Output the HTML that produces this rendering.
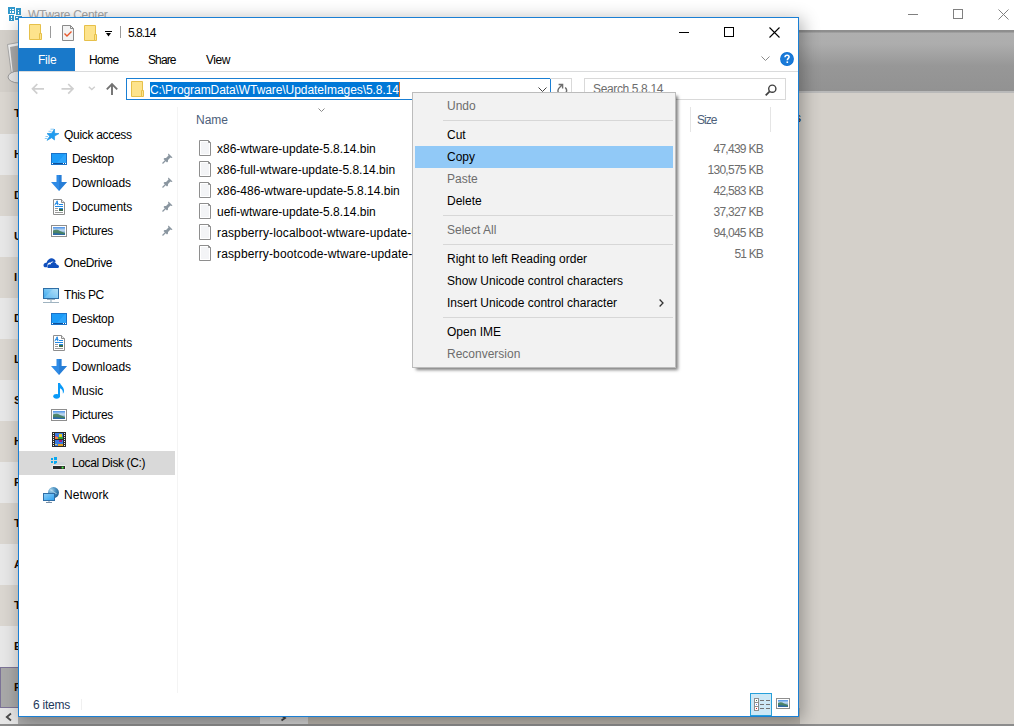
<!DOCTYPE html>
<html><head><meta charset="utf-8">
<style>
*{margin:0;padding:0;box-sizing:border-box}
html,body{width:1014px;height:726px;overflow:hidden;background:#d4d0ca;font-family:"Liberation Sans",sans-serif;font-size:12px;color:#000}
.a{position:absolute}
.t{position:absolute;white-space:nowrap;line-height:14px}
svg{position:absolute;overflow:visible}
.nv{position:absolute;white-space:nowrap;line-height:14px;color:#000}
.fn{position:absolute;left:217px;white-space:nowrap;line-height:14px}
.sz{position:absolute;right:251px;white-space:nowrap;line-height:14px;color:#6d6d6d;text-align:right}
.mi{position:absolute;left:447px;white-space:nowrap;line-height:14px}
.dis{color:#6d6d6d}
.sep{position:absolute;left:443px;width:230px;height:1px;background:#d7d7d7}
</style></head><body>
<div class="a" style="left:0;top:0;width:1014px;height:30px;background:#fff"></div><div class="a" style="left:0;top:30px;width:1014px;height:63px;background:linear-gradient(#8e8e8e 0px,#8e8e8e 2px,#afafaf 3px,#adadad 14px,#979797 36px,#929292 61px,#b9b9b9 61px,#b9b9b9 63px)"></div><svg style="left:0;top:0" width="30" height="30" viewBox="0 0 30 30" shape-rendering="crispEdges"><g fill="#3399cc"><rect x="8" y="7" width="7" height="7"/><rect x="16" y="8" width="5" height="7"/><rect x="9" y="15" width="5" height="6"/><rect x="15" y="16" width="7" height="4"/></g><g fill="#fff"><rect x="10" y="9" width="1" height="1"/><rect x="12" y="9" width="2" height="1"/><rect x="10" y="11" width="1" height="2"/><rect x="12" y="11" width="2" height="2"/><rect x="18" y="10" width="1" height="1"/><rect x="18" y="12" width="1" height="2"/><rect x="11" y="16" width="1" height="2"/><rect x="11" y="19" width="1" height="1"/><rect x="16" y="17" width="2" height="1"/></g></svg><div class="t" style="left:28px;top:8px;color:#a6a6a6;font-size:12px;letter-spacing:-0.3px">WTware Center</div><div class="a" style="left:908px;top:14px;width:10px;height:1px;background:#808080"></div><div class="a" style="left:953px;top:9px;width:10px;height:10px;border:1px solid #808080"></div><svg style="left:998px;top:9px" width="11" height="11"><path d="M0.5 0.5L10.5 10.5M10.5 0.5L0.5 10.5" stroke="#808080" stroke-width="1"/></svg><div class="a" style="left:0;top:92px;width:30px;height:42px;background:#dad6d0"></div><div class="t" style="left:14px;top:106px;color:#1a0a00;font-size:11.5px;font-weight:bold">T</div><div class="a" style="left:0;top:134px;width:30px;height:41px;background:#e7e7e7"></div><div class="t" style="left:14px;top:147px;color:#1a0a00;font-size:11.5px;font-weight:bold">H</div><div class="a" style="left:0;top:175px;width:30px;height:41px;background:#dad6d0"></div><div class="t" style="left:14px;top:188px;color:#1a0a00;font-size:11.5px;font-weight:bold">D</div><div class="a" style="left:0;top:216px;width:30px;height:41px;background:#e7e7e7"></div><div class="t" style="left:14px;top:229px;color:#1a0a00;font-size:11.5px;font-weight:bold">U</div><div class="a" style="left:0;top:257px;width:30px;height:41px;background:#dad6d0"></div><div class="t" style="left:14px;top:270px;color:#1a0a00;font-size:11.5px;font-weight:bold">I</div><div class="a" style="left:0;top:298px;width:30px;height:41px;background:#e7e7e7"></div><div class="t" style="left:14px;top:311px;color:#1a0a00;font-size:11.5px;font-weight:bold">D</div><div class="a" style="left:0;top:339px;width:30px;height:41px;background:#dad6d0"></div><div class="t" style="left:14px;top:352px;color:#1a0a00;font-size:11.5px;font-weight:bold">L</div><div class="a" style="left:0;top:380px;width:30px;height:41px;background:#e7e7e7"></div><div class="t" style="left:14px;top:393px;color:#1a0a00;font-size:11.5px;font-weight:bold">S</div><div class="a" style="left:0;top:421px;width:30px;height:41px;background:#dad6d0"></div><div class="t" style="left:14px;top:434px;color:#1a0a00;font-size:11.5px;font-weight:bold">H</div><div class="a" style="left:0;top:462px;width:30px;height:41px;background:#e7e7e7"></div><div class="t" style="left:14px;top:475px;color:#1a0a00;font-size:11.5px;font-weight:bold">F</div><div class="a" style="left:0;top:503px;width:30px;height:41px;background:#dad6d0"></div><div class="t" style="left:14px;top:516px;color:#1a0a00;font-size:11.5px;font-weight:bold">T</div><div class="a" style="left:0;top:544px;width:30px;height:41px;background:#e7e7e7"></div><div class="t" style="left:14px;top:557px;color:#1a0a00;font-size:11.5px;font-weight:bold">A</div><div class="a" style="left:0;top:585px;width:30px;height:41px;background:#dad6d0"></div><div class="t" style="left:14px;top:598px;color:#1a0a00;font-size:11.5px;font-weight:bold">T</div><div class="a" style="left:0;top:626px;width:30px;height:41px;background:#e7e7e7"></div><div class="t" style="left:14px;top:639px;color:#1a0a00;font-size:11.5px;font-weight:bold">E</div><div class="a" style="left:0;top:667px;width:30px;height:41px;background:#a8a8a8;border:1px solid #7c7396"></div><div class="t" style="left:14px;top:680px;color:#1a0a00;font-size:11.5px;font-weight:bold">F</div><div class="a" style="left:0;top:708px;width:308px;height:16px;background:#e6e6e6"></div><div class="a" style="left:18px;top:708px;width:242px;height:16px;background:#acacac"></div><div class="a" style="left:260px;top:708px;width:48px;height:16px;background:#d0d0d0"></div><div class="a" style="left:308px;top:708px;width:492px;height:16px;background:#b6b1a9"></div><div class="a" style="left:0;top:724px;width:1014px;height:2px;background:#8c8c8c"></div><svg style="left:5px;top:713px" width="7" height="8"><path d="M6 0.5L1.8 4L6 7.5" stroke="#4a4a4a" stroke-width="1.8" fill="none"/></svg><svg style="left:281px;top:715px" width="6" height="6"><path d="M0.5 0.5L4 3L0.5 5.5" stroke="#404040" stroke-width="1.8" fill="none"/></svg><div class="t" style="left:795px;top:111px;color:#111">s</div><div class="a" style="left:0;top:30px;width:18px;height:62px;background:#d3cfc9"></div><svg style="left:7px;top:42px" width="14" height="44" viewBox="0 0 14 44"><path d="M0.5 2.5L14 0V34L5 36Z" fill="#f2f2f2" stroke="#9a9a9a" stroke-width="0.8"/><path d="M3 5L14 3V31L6 33Z" fill="#a8a8a8"/><ellipse cx="12" cy="35" rx="11" ry="6" fill="#e6e6e6" stroke="#8a8a8a" stroke-width="0.8"/></svg><div class="a" style="left:18px;top:17px;width:781px;height:700px;box-shadow:3px 3px 16px 1px rgba(0,0,0,0.30)"></div><div class="a" style="left:18px;top:17px;width:781px;height:700px;background:#fff;border:1px solid #1a7fd4"></div><svg style="left:29px;top:24px" width="14" height="16" viewBox="0 0 14 16"><path d="M0.5 0.5H11.5V15.5H0.5Z" fill="#fde38c" stroke="#e6c04a"/><path d="M10.5 9.5H12.5V15.5H10.5Z" fill="#fde38c" stroke="#e6c04a"/></svg><div class="a" style="left:50px;top:26px;width:1px;height:12px;background:#9a9a9a"></div><svg style="left:62px;top:25px" width="12" height="16" viewBox="0 0 12 16"><path d="M0.5 0.5H8.5L11.5 3.5V15.5H0.5Z" fill="#f3f3f3" stroke="#8a8a8a"/><path d="M8.5 0.5V3.5H11.5" fill="none" stroke="#8a8a8a"/><path d="M2.5 8.5L5 11L9.5 6.5" fill="none" stroke="#e8572a" stroke-width="1.4"/></svg><svg style="left:84px;top:25px" width="14" height="16" viewBox="0 0 14 16"><path d="M0.5 0.5H11.5V15.5H0.5Z" fill="#fde38c" stroke="#e6c04a"/><path d="M10.5 9.5H12.5V15.5H10.5Z" fill="#fde38c" stroke="#e6c04a"/></svg><div class="a" style="left:105px;top:31px;width:7px;height:1px;background:#000"></div><svg style="left:105px;top:33px" width="7" height="4"><path d="M1 0H6L3.5 3.5Z" fill="#000"/></svg><div class="a" style="left:120px;top:26px;width:1px;height:12px;background:#9a9a9a"></div><div class="t" style="left:128px;top:26px;letter-spacing:-1.0px">5.8.14</div><div class="a" style="left:679px;top:32px;width:10px;height:1px;background:#000"></div><div class="a" style="left:724px;top:27px;width:10px;height:10px;border:1px solid #000"></div><svg style="left:769px;top:27px" width="11" height="11"><path d="M0.5 0.5L10.5 10.5M10.5 0.5L0.5 10.5" stroke="#000" stroke-width="1.1"/></svg><div class="a" style="left:19px;top:48px;width:56px;height:23px;background:#1979ca"></div><div class="t" style="left:38px;top:53px;color:#fff;letter-spacing:-0.23px">File</div><div class="t" style="left:89px;top:53px;letter-spacing:-0.63px">Home</div><div class="t" style="left:148px;top:53px;letter-spacing:-0.88px">Share</div><div class="t" style="left:206px;top:53px;letter-spacing:-0.43px">View</div><svg style="left:761px;top:56px" width="9" height="6"><path d="M0.5 0.5L4.5 4.5L8.5 0.5" fill="none" stroke="#8a8a8a" stroke-width="1"/></svg><svg style="left:780px;top:52px" width="14" height="14" viewBox="0 0 14 14"><circle cx="7" cy="7" r="6.9" fill="#0b6fd2"/><circle cx="7" cy="7" r="6.2" fill="#1a7ad8"/><path d="M5 5.2C5 3.9 5.9 3.2 7.1 3.2C8.3 3.2 9.1 4 9.1 5C9.1 6.3 7.3 6.5 7.3 8.2" fill="none" stroke="#fff" stroke-width="1.5"/><rect x="6.5" y="9.4" width="1.6" height="1.6" fill="#fff"/></svg><div class="a" style="left:19px;top:71px;width:779px;height:1px;background:#dadbdc"></div><svg style="left:31px;top:83px" width="14" height="12"><path d="M13 5.8H1.5M6.3 1L1.5 5.8L6.3 10.6" fill="none" stroke="#cfcfcf" stroke-width="1.7"/></svg><svg style="left:61px;top:83px" width="14" height="12"><path d="M0.5 5.8H12M7.2 1L12 5.8L7.2 10.6" fill="none" stroke="#cfcfcf" stroke-width="1.7"/></svg><svg style="left:88px;top:86px" width="8" height="5"><path d="M0.8 0.8L3.8 3.6L6.8 0.8" fill="none" stroke="#cfcfcf" stroke-width="1.4"/></svg><svg style="left:106px;top:83px" width="12" height="12"><path d="M6 12V1.5M0.8 6.4L6 1.2L11.2 6.4" fill="none" stroke="#727272" stroke-width="1.9"/></svg><div class="a" style="left:126px;top:78px;width:425px;height:22px;border:1px solid #1a7fd4"></div><svg style="left:131px;top:81px" width="14" height="16" viewBox="0 0 14 16"><path d="M0.5 0.5H11.5V15.5H0.5Z" fill="#fde38c" stroke="#e6c04a"/><path d="M10.5 9.5H12.5V15.5H10.5Z" fill="#fde38c" stroke="#e6c04a"/></svg><div class="a" style="left:150px;top:82px;width:250px;height:15px;background:#0078d7"></div><div class="t" style="left:150px;top:82px;color:#fff;line-height:17px;letter-spacing:-0.08px">C:\ProgramData\WTware\UpdateImages\5.8.14</div><div class="a" style="left:399px;top:82px;width:1px;height:15px;background:#e07020"></div><svg style="left:538px;top:87px" width="9" height="5"><path d="M0.5 0.5L4.5 4.5L8.5 0.5" fill="none" stroke="#404040" stroke-width="1"/></svg><div class="a" style="left:550px;top:78px;width:22px;height:22px;border:1px solid #d9d9d9;border-left:none"></div><svg style="left:555px;top:82px" width="14" height="14"><path d="M10.2 5.6A4.2 4.2 0 1 1 3.6 6.6L7.4 2.6M3.6 2.5H7.6V6.5" fill="none" stroke="#6e6e6e" stroke-width="1.4"/></svg><div class="a" style="left:584px;top:78px;width:202px;height:22px;border:1px solid #d9d9d9"></div><div class="t" style="left:593px;top:82px;color:#6d6d6d;letter-spacing:-0.36px">Search 5.8.14</div><svg style="left:765px;top:84px" width="12" height="12"><circle cx="7.3" cy="4.7" r="3.6" fill="none" stroke="#404040" stroke-width="1.4"/><path d="M4.7 7.3L0.7 11.3" stroke="#404040" stroke-width="1.8"/></svg><div class="a" style="left:177px;top:107px;width:1px;height:586px;background:#f4f4f4"></div><div class="a" style="left:19px;top:451px;width:156px;height:24px;background:#d9d9d9"></div><svg style="left:43px;top:128px" width="17" height="14" viewBox="0 0 17 14"><path d="M11.5 1.0L11.6 5.3L16.0 5.6L11.6 8.1L11.5 12.0L8.6 9.8L4.0 12.4L6.7 8.2L4.0 5.6L8.6 5.3Z" fill="#1f9cf0" stroke="#1a8ee0" stroke-width="0.6" stroke-linejoin="round"/><path d="M7.5 1.2H11M5.5 3.3H8.5M2.5 8.5H5M1.8 10.5H4.5" stroke="#4aaef0" stroke-width="0.9" opacity="0.7"/></svg><div class="nv" style="left:64px;top:128px;letter-spacing:-0.3px">Quick access</div><svg style="left:51px;top:153px" width="16" height="12" viewBox="0 0 16 12" shape-rendering="crispEdges"><rect x="0" y="0" width="16" height="12" fill="#1a72c8"/><rect x="1" y="1" width="14" height="9" fill="#1c9cf8"/><path d="M6 10L14 1H15V10Z" fill="#40b0ff" opacity="0.5" shape-rendering="auto"/><rect x="1" y="10" width="14" height="1" fill="#0f4f98"/><rect x="1" y="10" width="1" height="1" fill="#fff"/><rect x="12" y="10" width="1" height="1" fill="#fff"/><rect x="14" y="10" width="1" height="1" fill="#fff"/></svg><div class="nv" style="left:72px;top:152px;letter-spacing:-0.32px">Desktop</div><svg style="left:51px;top:175px" width="16" height="16" viewBox="0 0 16 16"><path d="M5.5 0H10.5V7H16L8 16L0 7H5.5Z" fill="#2f8be6"/><path d="M8 0H10.5V7H16L8 16Z" fill="#1f72c8" opacity="0.5"/></svg><div class="nv" style="left:72px;top:176px;letter-spacing:-0.04px">Downloads</div><svg style="left:53px;top:199px" width="12" height="16" viewBox="0 0 12 16"><path d="M0.5 0.5H8.5L11.5 3.5V15.5H0.5Z" fill="#fff" stroke="#8e8e8e"/><path d="M8.5 0.5V3.5H11.5" fill="#e8e8e8" stroke="#8e8e8e"/><path d="M1.8 6.2L4.2 1.8M4.2 1.8L4.8 6.2M2.6 4.6H5.4" fill="none" stroke="#1e88e5" stroke-width="1"/><g fill="#1e88e5" shape-rendering="crispEdges"><rect x="6" y="5" width="4" height="1"/><rect x="2" y="7" width="8" height="1"/><rect x="6" y="9" width="4" height="1"/></g><g fill="#9a9a9a" shape-rendering="crispEdges"><rect x="2" y="9" width="3" height="1"/><rect x="2" y="11" width="3" height="1"/><rect x="2" y="13" width="8" height="1"/></g><rect x="6" y="10" width="4" height="2" fill="#3a6a4a"/></svg><div class="nv" style="left:72px;top:200px;letter-spacing:-0.04px">Documents</div><svg style="left:51px;top:225px" width="16" height="12" viewBox="0 0 16 12"><defs><linearGradient id="pg51225" x1="0" y1="0" x2="0" y2="1"><stop offset="0" stop-color="#4a90e8"/><stop offset="0.4" stop-color="#c4dcf0"/><stop offset="1" stop-color="#3f7ab0"/></linearGradient></defs><rect x="0.5" y="0.5" width="15" height="11" fill="#fff" stroke="#8e8e8e"/><rect x="2" y="2" width="12" height="8" fill="url(#pg51225)"/><path d="M2 5.5C4 4.5 7 4.5 9 6L14 8V10H2Z" fill="#3f7a55" opacity="0.85"/><path d="M2 8.5C5 8 10 9 14 9.3V10H2Z" fill="#2c6aa8"/></svg><div class="nv" style="left:72px;top:224px;letter-spacing:-0.29px">Pictures</div><svg style="left:43px;top:258px" width="16" height="10" viewBox="0 0 16 10"><path d="M0.5 7.5C0.5 5.5 2 4.5 3.5 4.8C4.5 1.5 7 0 9 0.3C11 0.6 12.5 2 12.8 3.6L11 4.2C10 3.2 8.5 3.4 7.8 4.6C6.2 4 4.5 5 4.4 7.2L3.8 9.2L1.8 9.2C1 9 0.5 8.3 0.5 7.5Z" fill="#0f4fbd"/><path d="M5.2 10C4.6 10 4.2 9.3 4.4 8.2C4.6 6.8 6 6 7.6 6.4C8.2 4.5 10 3.6 11.6 4.2C12.8 4.6 13.5 5.6 13.6 6.6C15 6.6 16 7.6 16 8.6C16 9.5 15.5 10 15 10Z" fill="#0f4fbd"/></svg><div class="nv" style="left:64px;top:256px;letter-spacing:-0.31px">OneDrive</div><svg style="left:43px;top:288px" width="16" height="15" viewBox="0 0 16 15"><defs><linearGradient id="pcg" x1="0" y1="1" x2="1" y2="0"><stop offset="0" stop-color="#3aa8ee"/><stop offset="1" stop-color="#a6dcf8"/></linearGradient></defs><rect x="0.5" y="0.5" width="15" height="10" fill="url(#pcg)" stroke="#2f6ea6"/><path d="M1 10L10 1H15V10Z" fill="#fff" opacity="0.18"/><rect x="4" y="11" width="8" height="1" fill="#9ab0bf"/><rect x="0" y="14" width="16" height="1" fill="#9fb3c0"/><rect x="7" y="12" width="2" height="2" fill="#c5d3dc"/></svg><div class="nv" style="left:64px;top:288px;letter-spacing:-0.4px">This PC</div><svg style="left:51px;top:313px" width="16" height="12" viewBox="0 0 16 12" shape-rendering="crispEdges"><rect x="0" y="0" width="16" height="12" fill="#1a72c8"/><rect x="1" y="1" width="14" height="9" fill="#1c9cf8"/><path d="M6 10L14 1H15V10Z" fill="#40b0ff" opacity="0.5" shape-rendering="auto"/><rect x="1" y="10" width="14" height="1" fill="#0f4f98"/><rect x="1" y="10" width="1" height="1" fill="#fff"/><rect x="12" y="10" width="1" height="1" fill="#fff"/><rect x="14" y="10" width="1" height="1" fill="#fff"/></svg><div class="nv" style="left:72px;top:312px;letter-spacing:-0.32px">Desktop</div><svg style="left:53px;top:335px" width="12" height="16" viewBox="0 0 12 16"><path d="M0.5 0.5H8.5L11.5 3.5V15.5H0.5Z" fill="#fff" stroke="#8e8e8e"/><path d="M8.5 0.5V3.5H11.5" fill="#e8e8e8" stroke="#8e8e8e"/><path d="M1.8 6.2L4.2 1.8M4.2 1.8L4.8 6.2M2.6 4.6H5.4" fill="none" stroke="#1e88e5" stroke-width="1"/><g fill="#1e88e5" shape-rendering="crispEdges"><rect x="6" y="5" width="4" height="1"/><rect x="2" y="7" width="8" height="1"/><rect x="6" y="9" width="4" height="1"/></g><g fill="#9a9a9a" shape-rendering="crispEdges"><rect x="2" y="9" width="3" height="1"/><rect x="2" y="11" width="3" height="1"/><rect x="2" y="13" width="8" height="1"/></g><rect x="6" y="10" width="4" height="2" fill="#3a6a4a"/></svg><div class="nv" style="left:72px;top:336px;letter-spacing:-0.04px">Documents</div><svg style="left:51px;top:359px" width="16" height="16" viewBox="0 0 16 16"><path d="M5.5 0H10.5V7H16L8 16L0 7H5.5Z" fill="#2f8be6"/><path d="M8 0H10.5V7H16L8 16Z" fill="#1f72c8" opacity="0.5"/></svg><div class="nv" style="left:72px;top:360px;letter-spacing:-0.04px">Downloads</div><svg style="left:53px;top:382px" width="12" height="17" viewBox="0 0 12 17"><rect x="5" y="1" width="2" height="14" fill="#0a9af8"/><ellipse cx="3.6" cy="14.3" rx="3.3" ry="2.4" fill="#0a9af8"/><path d="M7 1C7.8 3.5 11 5 11 8.5C11 10 10.5 11.2 9.8 11.6C10.2 9.5 9.5 7 7 6.2Z" fill="#0a9af8"/></svg><div class="nv" style="left:72px;top:384px">Music</div><svg style="left:51px;top:409px" width="16" height="12" viewBox="0 0 16 12"><defs><linearGradient id="pg51409" x1="0" y1="0" x2="0" y2="1"><stop offset="0" stop-color="#4a90e8"/><stop offset="0.4" stop-color="#c4dcf0"/><stop offset="1" stop-color="#3f7ab0"/></linearGradient></defs><rect x="0.5" y="0.5" width="15" height="11" fill="#fff" stroke="#8e8e8e"/><rect x="2" y="2" width="12" height="8" fill="url(#pg51409)"/><path d="M2 5.5C4 4.5 7 4.5 9 6L14 8V10H2Z" fill="#3f7a55" opacity="0.85"/><path d="M2 8.5C5 8 10 9 14 9.3V10H2Z" fill="#2c6aa8"/></svg><div class="nv" style="left:72px;top:408px;letter-spacing:-0.29px">Pictures</div><svg style="left:52px;top:432px" width="14" height="15" viewBox="0 0 14 15" shape-rendering="crispEdges"><rect x="0" y="0" width="14" height="15" fill="#2b2b2b"/><g fill="#f0f0f0"><rect x="1" y="1" width="1" height="1"/><rect x="1" y="3" width="1" height="1"/><rect x="1" y="5" width="1" height="1"/><rect x="1" y="7" width="1" height="1"/><rect x="1" y="9" width="1" height="1"/><rect x="1" y="11" width="1" height="1"/><rect x="1" y="13" width="1" height="1"/><rect x="12" y="1" width="1" height="1"/><rect x="12" y="3" width="1" height="1"/><rect x="12" y="5" width="1" height="1"/><rect x="12" y="7" width="1" height="1"/><rect x="12" y="9" width="1" height="1"/><rect x="12" y="11" width="1" height="1"/><rect x="12" y="13" width="1" height="1"/></g><rect x="3" y="1" width="8" height="6" fill="#3a7ae0"/><rect x="3" y="8" width="8" height="6" fill="#3a7ae0"/><rect x="7" y="2" width="3" height="3" fill="#e8d020"/><rect x="3" y="5" width="3" height="2" fill="#f08040"/><rect x="6" y="5" width="5" height="2" fill="#30a040"/><rect x="3" y="4" width="2" height="1" fill="#c040a0"/><rect x="7" y="8" width="3" height="2" fill="#a02080"/><rect x="6" y="12" width="5" height="2" fill="#e0a020"/><rect x="3" y="12" width="2" height="1" fill="#c8d080"/></svg><div class="nv" style="left:72px;top:432px;letter-spacing:-0.58px">Videos</div><svg style="left:51px;top:456px" width="16" height="15" viewBox="0 0 16 15"><g fill="#08a8f0" shape-rendering="crispEdges"><rect x="0" y="2" width="2" height="2"/><rect x="3" y="1" width="3" height="3"/><rect x="0" y="5" width="2" height="2"/><rect x="3" y="5" width="3" height="3"/></g><path d="M7 6H13L15 9.5H2Z" fill="#d0d4d8"/><rect x="1.5" y="9" width="13" height="4.5" rx="0.8" fill="#f2f2f2"/><rect x="2" y="10" width="12" height="3" fill="#2a2a2a"/><rect x="11" y="11" width="1.2" height="1.2" fill="#50ff50"/><circle cx="11.6" cy="11.6" r="1.3" fill="#40e040" opacity="0.5"/></svg><div class="nv" style="left:72px;top:456px;letter-spacing:-0.37px">Local Disk (C:)</div><svg style="left:43px;top:487px" width="16" height="16" viewBox="0 0 16 16"><defs><radialGradient id="glb" cx="0.3" cy="0.3" r="0.8"><stop offset="0" stop-color="#a8d4ec"/><stop offset="0.5" stop-color="#4a90c0"/><stop offset="1" stop-color="#1f5f90"/></radialGradient><linearGradient id="nmg" x1="0" y1="0" x2="1" y2="1"><stop offset="0" stop-color="#8fd0f8"/><stop offset="1" stop-color="#2aa0f0"/></linearGradient></defs><circle cx="10.5" cy="5.6" r="5.5" fill="url(#glb)"/><path d="M7 2.5C8 3.5 9.5 3 10 4.5C10.5 6 12.5 5 13.5 7" fill="none" stroke="#c8e4f0" stroke-width="1" opacity="0.7"/><rect x="0.5" y="6.5" width="11" height="7" fill="url(#nmg)" stroke="#2f6ea6"/><rect x="3" y="15" width="6" height="1" fill="#7890a8"/><rect x="5" y="14" width="2" height="1" fill="#c0ccd8"/></svg><div class="nv" style="left:64px;top:488px;letter-spacing:0.1px">Network</div><svg style="left:162px;top:153px" width="11" height="11" viewBox="0 0 11 11"><path d="M0.5 10.5L4 7" stroke="#8a96a0" stroke-width="1.3"/><path d="M6.5 0.5L10.5 4.5L9.5 5L8.5 4.5L6 7L6 8.5L5 9.5L1.5 6L2.5 5L4 5L6.5 2.5L6 1.5Z" fill="#8a96a0"/></svg><svg style="left:162px;top:177px" width="11" height="11" viewBox="0 0 11 11"><path d="M0.5 10.5L4 7" stroke="#8a96a0" stroke-width="1.3"/><path d="M6.5 0.5L10.5 4.5L9.5 5L8.5 4.5L6 7L6 8.5L5 9.5L1.5 6L2.5 5L4 5L6.5 2.5L6 1.5Z" fill="#8a96a0"/></svg><svg style="left:162px;top:201px" width="11" height="11" viewBox="0 0 11 11"><path d="M0.5 10.5L4 7" stroke="#8a96a0" stroke-width="1.3"/><path d="M6.5 0.5L10.5 4.5L9.5 5L8.5 4.5L6 7L6 8.5L5 9.5L1.5 6L2.5 5L4 5L6.5 2.5L6 1.5Z" fill="#8a96a0"/></svg><svg style="left:162px;top:225px" width="11" height="11" viewBox="0 0 11 11"><path d="M0.5 10.5L4 7" stroke="#8a96a0" stroke-width="1.3"/><path d="M6.5 0.5L10.5 4.5L9.5 5L8.5 4.5L6 7L6 8.5L5 9.5L1.5 6L2.5 5L4 5L6.5 2.5L6 1.5Z" fill="#8a96a0"/></svg><svg style="left:318px;top:108px" width="7" height="4"><path d="M0.5 0.5L3.5 3.5L6.5 0.5" fill="none" stroke="#8a8a8a" stroke-width="1"/></svg><div class="t" style="left:196px;top:113px;color:#4c607a">Name</div><div class="a" style="left:690px;top:107px;width:1px;height:25px;background:#e5e5e5"></div><div class="a" style="left:770px;top:107px;width:1px;height:25px;background:#e5e5e5"></div><div class="t" style="left:697px;top:113px;color:#4c607a;letter-spacing:-1.0px">Size</div><svg style="left:199px;top:140px" width="12" height="16" viewBox="0 0 12 16"><path d="M0.5 0.5H9.5L11.5 2.5V15.5H0.5Z" fill="#fff" stroke="#8e8e8e"/><rect x="2" y="2" width="8" height="12" fill="#f3f4f6"/><path d="M9.5 0.5V2.5H11.5" fill="none" stroke="#8e8e8e"/></svg><div class="fn" style="top:142px">x86-wtware-update-5.8.14.bin</div><div class="sz" style="top:142px;letter-spacing:-0.72px">47,439 KB</div><svg style="left:199px;top:161px" width="12" height="16" viewBox="0 0 12 16"><path d="M0.5 0.5H9.5L11.5 2.5V15.5H0.5Z" fill="#fff" stroke="#8e8e8e"/><rect x="2" y="2" width="8" height="12" fill="#f3f4f6"/><path d="M9.5 0.5V2.5H11.5" fill="none" stroke="#8e8e8e"/></svg><div class="fn" style="top:163px">x86-full-wtware-update-5.8.14.bin</div><div class="sz" style="top:163px;letter-spacing:-0.72px">130,575 KB</div><svg style="left:199px;top:182px" width="12" height="16" viewBox="0 0 12 16"><path d="M0.5 0.5H9.5L11.5 2.5V15.5H0.5Z" fill="#fff" stroke="#8e8e8e"/><rect x="2" y="2" width="8" height="12" fill="#f3f4f6"/><path d="M9.5 0.5V2.5H11.5" fill="none" stroke="#8e8e8e"/></svg><div class="fn" style="top:184px">x86-486-wtware-update-5.8.14.bin</div><div class="sz" style="top:184px;letter-spacing:-0.72px">42,583 KB</div><svg style="left:199px;top:203px" width="12" height="16" viewBox="0 0 12 16"><path d="M0.5 0.5H9.5L11.5 2.5V15.5H0.5Z" fill="#fff" stroke="#8e8e8e"/><rect x="2" y="2" width="8" height="12" fill="#f3f4f6"/><path d="M9.5 0.5V2.5H11.5" fill="none" stroke="#8e8e8e"/></svg><div class="fn" style="top:205px">uefi-wtware-update-5.8.14.bin</div><div class="sz" style="top:205px;letter-spacing:-0.72px">37,327 KB</div><svg style="left:199px;top:224px" width="12" height="16" viewBox="0 0 12 16"><path d="M0.5 0.5H9.5L11.5 2.5V15.5H0.5Z" fill="#fff" stroke="#8e8e8e"/><rect x="2" y="2" width="8" height="12" fill="#f3f4f6"/><path d="M9.5 0.5V2.5H11.5" fill="none" stroke="#8e8e8e"/></svg><div class="fn" style="top:226px;letter-spacing:0.15px">raspberry-localboot-wtware-update-5.8.14.bin</div><div class="sz" style="top:226px;letter-spacing:-0.72px">94,045 KB</div><svg style="left:199px;top:245px" width="12" height="16" viewBox="0 0 12 16"><path d="M0.5 0.5H9.5L11.5 2.5V15.5H0.5Z" fill="#fff" stroke="#8e8e8e"/><rect x="2" y="2" width="8" height="12" fill="#f3f4f6"/><path d="M9.5 0.5V2.5H11.5" fill="none" stroke="#8e8e8e"/></svg><div class="fn" style="top:247px;letter-spacing:0.14px">raspberry-bootcode-wtware-update-5.8.14.bin</div><div class="sz" style="top:247px;letter-spacing:-0.85px">51 KB</div><div class="t" style="left:33px;top:698px;color:#1e395b;letter-spacing:-0.25px">6 items</div><div class="a" style="left:81px;top:699px;width:1px;height:11px;background:#f0f0f0"></div><div class="a" style="left:750px;top:693px;width:22px;height:23px;background:#cde8f6;border:1px solid #26a0da"></div><svg style="left:754px;top:698px" width="17" height="13" viewBox="0 0 17 13" shape-rendering="crispEdges"><rect x="0" y="0" width="5" height="13" fill="#8e8e8e"/><g fill="#fff"><rect x="1" y="1" width="3" height="3"/><rect x="1" y="5" width="3" height="3"/><rect x="1" y="9" width="3" height="3"/></g><rect x="2" y="2" width="1" height="1" fill="#4a7a60"/><rect x="2" y="6" width="1" height="1" fill="#6090f0"/><rect x="2" y="10" width="1" height="1" fill="#d82020"/><g fill="#737373"><rect x="6" y="2" width="4" height="1"/><rect x="12" y="2" width="4" height="1"/><rect x="6" y="6" width="4" height="1"/><rect x="12" y="6" width="4" height="1"/><rect x="6" y="10" width="4" height="1"/><rect x="12" y="10" width="4" height="1"/></g></svg><svg style="left:776px;top:698px" width="14" height="11" viewBox="0 0 14 11"><defs><linearGradient id="lig" x1="0" y1="0" x2="0" y2="1"><stop offset="0" stop-color="#4a90e8"/><stop offset="0.35" stop-color="#bcd8f0"/><stop offset="1" stop-color="#3f7ab0"/></linearGradient></defs><rect x="0.5" y="0.5" width="13" height="10" fill="#fff" stroke="#8e8e8e"/><rect x="2" y="2" width="10" height="7" fill="url(#lig)"/><path d="M2 5C4 4 6 4 8 5.5L12 7V9H2Z" fill="#3f7a55" opacity="0.85"/><path d="M2 7.5C5 7 9 8 12 8.5V9H2Z" fill="#2c6aa8"/></svg><div class="a" style="left:412px;top:92px;width:264px;height:276px;background:#f2f2f2;border:1px solid #bcbcbc;box-shadow:3px 3px 3px -1px rgba(0,0,0,0.5)"></div><div class="a" style="left:415px;top:146px;width:258px;height:22px;background:#91c9f7"></div><div class="mi dis" style="top:99px">Undo</div><div class="mi" style="top:128px">Cut</div><div class="mi" style="top:150px">Copy</div><div class="mi dis" style="top:172px">Paste</div><div class="mi" style="top:194px">Delete</div><div class="mi dis" style="top:223px">Select All</div><div class="mi" style="top:252px">Right to left Reading order</div><div class="mi" style="top:274px">Show Unicode control characters</div><div class="mi" style="top:296px">Insert Unicode control character</div><div class="mi" style="top:325px">Open IME</div><div class="mi dis" style="top:347px">Reconversion</div><div class="sep" style="top:120px"></div><div class="sep" style="top:215px"></div><div class="sep" style="top:244px"></div><div class="sep" style="top:317px"></div><svg style="left:659px;top:299px" width="5" height="8"><path d="M0.6 0.5L4 4L0.6 7.5" fill="none" stroke="#333" stroke-width="1.3"/></svg></body></html>
